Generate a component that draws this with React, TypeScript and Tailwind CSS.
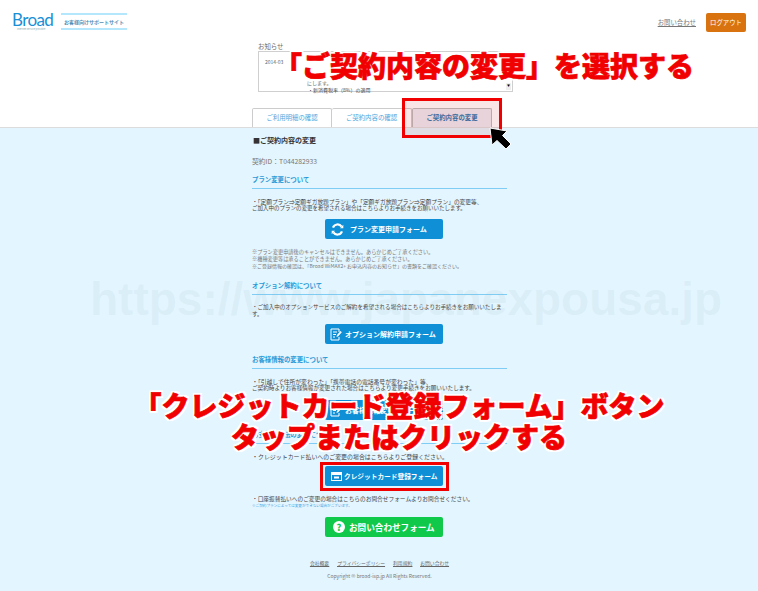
import type { ReactNode } from "react";

const jp = "font-['Noto_Sans_CJK_JP','Noto_Sans',sans-serif]";
const caption =
  "font-black whitespace-nowrap text-[#f00000] [-webkit-text-stroke:0.7px_#f00000] [text-shadow:2px_0_#fff,-2px_0_#fff,0_2px_#fff,0_-2px_#fff,2px_2px_#fff,-2px_2px_#fff,2px_-2px_#fff,-2px_-2px_#fff]";

function Line({ children, className = "text-[5.7px]" }: { children: ReactNode; className?: string }) {
  return <p className={`h-[7px] leading-[7px] whitespace-nowrap ${className}`}>{children}</p>;
}

function SectionHead({ children, className = "" }: { children: ReactNode; className?: string }) {
  return (
    <h3 className={`h-[13px] border-b border-[#7fcdf5] text-[6.4px] leading-[8px] font-bold text-[#2a9ad8] ${className}`}>
      {children}
    </h3>
  );
}

function FormButton({
  icon,
  label,
  green = false,
  size = "text-[7px]",
  layout = "pl-[6px] gap-[6px]",
}: {
  icon: ReactNode;
  label: string;
  green?: boolean;
  size?: string;
  layout?: string;
}) {
  return (
    <a
      className={`ml-[73px] flex h-[20px] w-[118px] items-center rounded-[2px] font-bold text-white ${layout} ${size} ${green ? "bg-[#10c94b]" : "bg-[#0e8fd6]"}`}
    >
      {icon}
      <span className="whitespace-nowrap">{label}</span>
    </a>
  );
}

function RenewIcon() {
  return (
    <svg width="13" height="13" viewBox="0 0 13 13" fill="none" stroke="#fff" strokeWidth="2.2">
      <path d="M2 4.6 A4.9 4.9 0 0 1 10.6 3.6" />
      <path d="M11 8.4 A4.9 4.9 0 0 1 2.4 9.4" />
      <path d="M9 5.2 L12.3 5.2 L12.3 1.8 Z" fill="#fff" stroke="none" />
      <path d="M4 7.8 L0.7 7.8 L0.7 11.2 Z" fill="#fff" stroke="none" />
    </svg>
  );
}

function FormIcon() {
  return (
    <svg width="12" height="13" viewBox="0 0 12 13" fill="none" stroke="#fff" strokeWidth="1">
      <path d="M9 4 V1 H1 V12 H9 V9" />
      <path d="M3 4 H7 M3 6.5 H6 M3 9 H5" />
      <path d="M6.5 9 L7 7 L10.5 3 L11.8 4.2 L8.3 8.3 Z" fill="#fff" stroke="none" />
    </svg>
  );
}

function CardIcon() {
  return (
    <svg width="11" height="9" viewBox="0 0 11 9">
      <path fillRule="evenodd" d="M0 0 H11 V9 H0 Z M1 3 V8 H10 V3 Z" fill="#fff" />
      <rect x="3" y="4.5" width="5" height="2" fill="#fff" />
    </svg>
  );
}

export default function App() {
  return (
    <div className={`relative h-[591px] w-[758px] overflow-hidden bg-white ${jp}`}>
      <header className="h-[127px]">
        <div className="flex h-[46px] items-start justify-between px-[12px] pt-[13px]">
          <div className="flex items-start gap-[7px]">
            <div className="flex h-[17px] w-[42px] flex-col">
              <span className="font-['Lato',sans-serif] text-[17px] leading-[13px] font-normal tracking-[-0.6px] text-[#1a8fd6]">Broad</span>
              <span className="mt-[2px] ml-[5px] text-[2.5px] leading-[3px] whitespace-nowrap text-[#8aa]">internet service provider</span>
            </div>
            <div className="flex h-[17px] w-[66px] items-center justify-center border-y-2 border-[#b4e6fc] text-[5px] font-bold text-[#4f8fb8]">
              お客様向けサポートサイト
            </div>
          </div>
          <div className="flex items-center gap-[10px]">
            <a className="text-[6.4px] text-[#777] underline">お問い合わせ</a>
            <a className="flex h-[19px] w-[40px] items-center justify-center rounded-[2px] bg-[#d9730f] text-[6.4px] text-white">ログアウト</a>
          </div>
        </div>

        <div className="ml-[258px] text-[#666]">
          <p className="h-[5px] text-[6.4px] leading-[2px]">お知らせ</p>
          <div className="relative h-[41px] w-[255px] border border-[#cfcfcf] text-[5px]">
            <p className="absolute top-[6px] left-[6px]">2014-03</p>
            <p className="absolute top-[27px] left-[48px]">にします。</p>
            <p className="absolute top-[34px] left-[49px] text-[#444]">・新消費税率（8%）の適用</p>
            <span className="absolute right-[1px] bottom-[1px] flex h-[7px] w-[5px] items-center justify-center bg-[#eee] text-[3px] text-black">▼</span>
          </div>
        </div>

        <nav className="mt-[16px] ml-[252px] flex h-[19px] text-[6.4px]">
          <a className="flex h-[19px] w-[80px] items-center justify-center rounded-t-[2px] border border-b-0 border-[#ccc] text-[#4da6de]">ご利用明細の確認</a>
          <a className="flex h-[19px] w-[80px] items-center justify-center rounded-t-[2px] border-y border-r border-b-0 border-[#ccc] text-[#4da6de]">ご契約内容の確認</a>
          <a className="flex h-[19px] w-[80px] items-center justify-center rounded-t-[2px] border border-b-0 border-[#bbb] bg-[#ecebf3] font-bold text-[#2a78b0]">ご契約内容の変更</a>
        </nav>
      </header>

      <main className="h-[464px] border-t border-[#dcdcdc] bg-[#e3f5fe]">
        <div className="ml-[252px] w-[255px] text-[#444]">
          <h2 className="mt-[8px] h-[8px] pl-[1px] text-[7px] leading-[8px] font-bold text-[#333]">■ご契約内容の変更</h2>
          <p className="mt-[13px] h-[8px] text-[6.8px] leading-[8px] text-[#777]">契約ID：T044282933</p>

          <SectionHead className="mt-[11px]">プラン変更について</SectionHead>
          <div className="mt-[9px]">
            <Line>・「定額プラン⇒定額ギガ放題プラン」や「定額ギガ放題プラン⇒定額プラン」の変更等、</Line>
            <Line className="text-[5.5px]">ご加入中のプランの変更を希望される場合はこちらよりお手続きをお願いいたします。</Line>
          </div>
          <div className="mt-[7px] flex">
            <FormButton icon={<RenewIcon />} label="プラン変更申請フォーム" />
          </div>
          <div className="mt-[9px] text-[#777]">
            <Line className="text-[5.2px]">※プラン変更申請後のキャンセルはできません。あらかじめご了承ください。</Line>
            <Line className="text-[5.2px]">※機種変更等は承ることができません。あらかじめご了承ください。</Line>
            <Line className="text-[5px]">※ご登録情報の確認は、「Broad WiMAX2+ お申込内容のお知らせ」の書類をご確認ください。</Line>
          </div>

          <SectionHead className="mt-[13px]">オプション解約について</SectionHead>
          <div className="mt-[9px]">
            <Line className="text-[5.55px]">・ご加入中のオプションサービスのご解約を希望される場合はこちらよりお手続きをお願いいたしま</Line>
            <Line className="text-[5.55px]">す。</Line>
          </div>
          <div className="mt-[6px] flex">
            <FormButton icon={<FormIcon />} label="オプション解約申請フォーム" layout="pl-[5px] gap-[3px]" />
          </div>

          <SectionHead className="mt-[12px]">お客様情報の変更について</SectionHead>
          <div className="mt-[9px]">
            <Line className="text-[5.8px]">・「引越しで住所が変わった」「携帯電話の電話番号が変わった」等、</Line>
            <Line className="text-[5.6px]">ご契約時よりお客様情報が変更された場合はこちらより変更手続きをお願いいたします。</Line>
          </div>
          <div className="mt-[8px] flex">
            <FormButton icon={<FormIcon />} label="お客様情報変更フォーム" layout="pl-[5px] gap-[3px]" />
          </div>

          <SectionHead className="mt-[11px]">お支払い方法の変更について</SectionHead>
          <div className="mt-[9px]">
            <Line className="text-[5.95px]">・クレジットカード払いへのご変更の場合はこちらよりご登録ください。</Line>
          </div>
          <div className="mt-[6px] flex">
            <FormButton icon={<CardIcon />} label="クレジットカード登録フォーム" size="text-[6.7px]" layout="pl-[6px] gap-[2px]" />
          </div>
          <div className="mt-[9px]">
            <Line>・口座振替払いへのご変更の場合はこちらのお問合せフォームよりお問合せください。</Line>
            <Line className="text-[3.6px] text-[#3aa0de]">※ご契約プランによっては変更ができない場合がございます。</Line>
          </div>
          <div className="mt-[8px] flex">
            <FormButton
              green
              size="text-[8.6px]"
              layout="pl-[8px] gap-[4px]"
              icon={<span className="flex h-[12px] w-[12px] items-center justify-center rounded-full bg-white text-[9px] leading-none font-black text-[#10c94b]">?</span>}
              label="お問い合わせフォーム"
            />
          </div>
          <nav className="mt-[22px] flex justify-center gap-[8px] text-[4.8px] text-[#666] underline">
            <a>会社概要</a>
            <a>プライバシーポリシー</a>
            <a>利用規約</a>
            <a>お問い合わせ</a>
          </nav>
          <p className="mt-[6px] text-center text-[5px] text-[#777]">Copyright © broad-isp.jp All Rights Reserved.</p>
        </div>
      </main>

      {/* watermark */}
      <div className="pointer-events-none absolute top-[269px] left-[90px] font-['Liberation_Sans',sans-serif] text-[46px] leading-[60px] font-bold whitespace-nowrap text-[#8cb4c8]/10">
        https://www.japanexpousa.jp
      </div>

      {/* highlights */}
      <div className="absolute top-[98px] left-[402px] h-[40px] w-[100px] border-[3px] border-[#f00000] bg-[#c80000]/10" />
      <div className="absolute top-[462px] left-[320px] h-[29px] w-[129px] border-[3px] border-[#f00000]" />

      {/* cursor */}
      <svg className="absolute top-[126px] left-[488px]" width="26" height="26" viewBox="0 0 26 26">
        <path d="M2 2 L4 19 L9 14.5 L18 23 L23 18 L14.5 9.5 L19 5 Z" fill="#000" stroke="#fff" strokeWidth="1" />
      </svg>

      {/* captions */}
      <p className={`absolute top-[45px] left-[274px] text-[28px] leading-[40px] ${caption}`}>
        「ご契約内容の変更」を選択する
      </p>
      <div className="absolute top-[390px] left-0 w-[758px] pl-[40px] text-center">
        <p className={`text-[28px] leading-[31px] ${caption}`}>「クレジットカード登録フォーム」ボタン</p>
        <p className={`text-[28px] leading-[30px] ${caption}`}>タップまたはクリックする</p>
      </div>
    </div>
  );
}
